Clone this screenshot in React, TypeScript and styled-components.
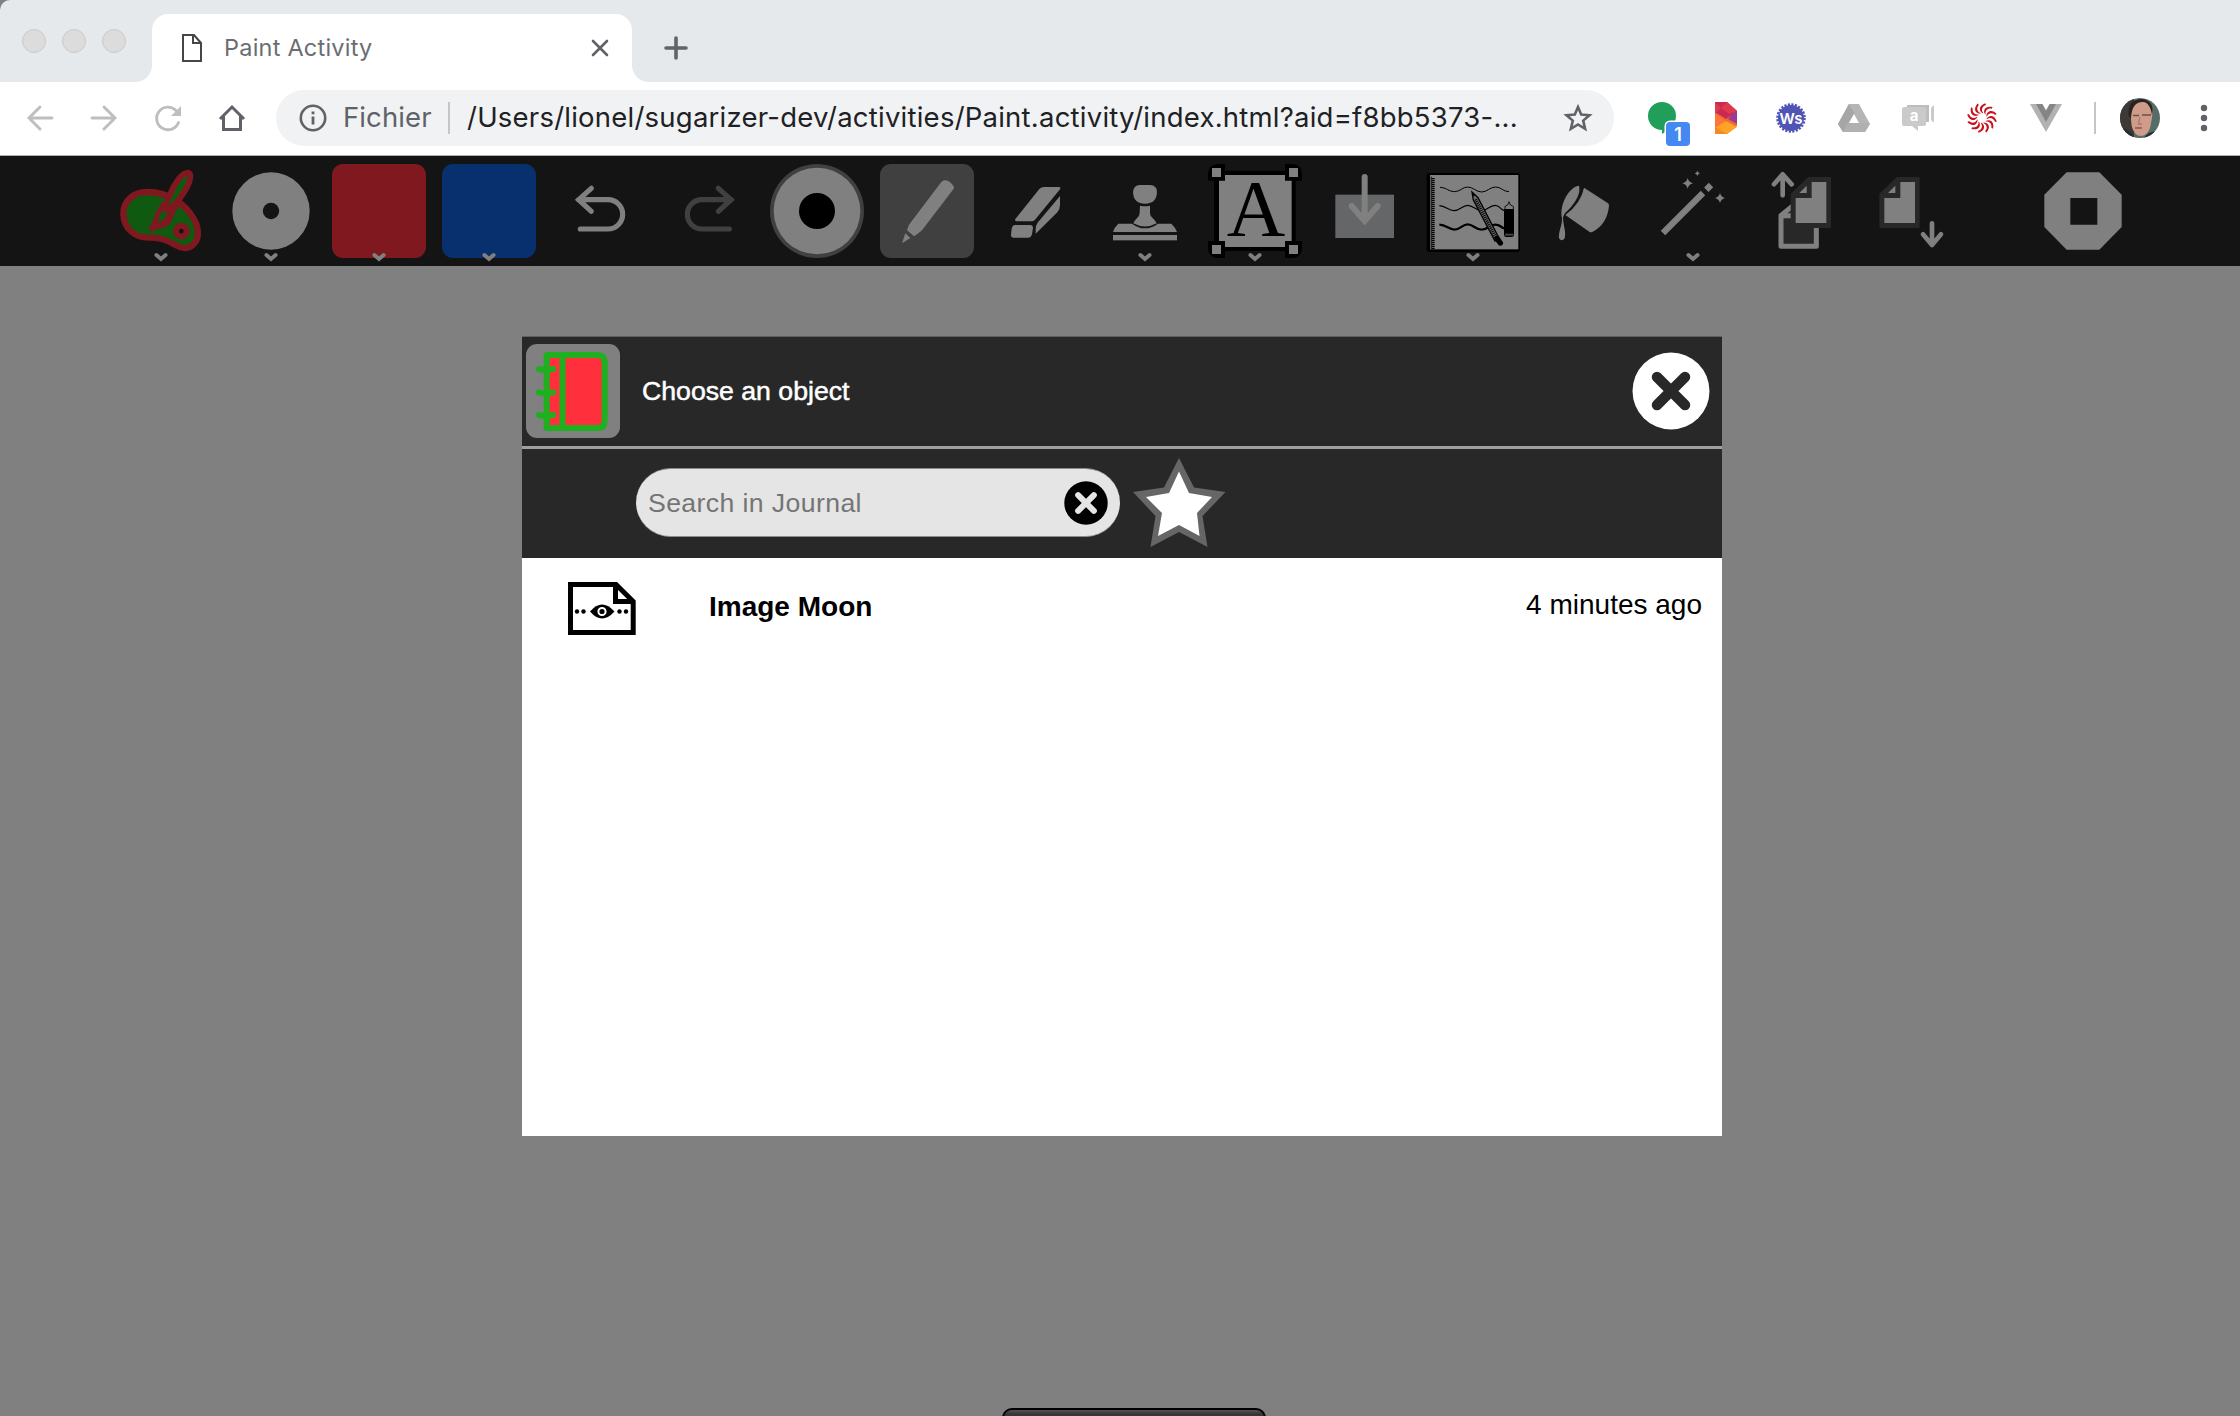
import React from "react";
import styled, { createGlobalStyle } from "styled-components";

const sans = `"Liberation Sans", Arial, sans-serif`;
const ui = `Inter, Roboto, sans-serif`;

const GlobalStyle = createGlobalStyle`
  * { box-sizing: border-box; }
  html, body { margin: 0; padding: 0; background: #808080; }
  svg { display: block; overflow: visible; flex: none; }
`;

const Window = styled.div`
  display: flex;
  flex-direction: column;
  width: 2240px;
  height: 1416px;
  overflow: hidden;
  background: #808080;
`;

/* ---------- browser chrome ---------- */
const TabStrip = styled.div`
  display: flex;
  align-items: flex-end;
  height: 82px;
  background: #e5e9ec;
  border-top-left-radius: 10px;
`;
const Lights = styled.div`
  display: flex;
  gap: 16px;
  width: 152px;
  height: 53px;
  padding-left: 22px;
  align-self: flex-start;
  align-items: flex-end;
`;
const Light = styled.span`
  width: 24px;
  height: 24px;
  border-radius: 50%;
  background: #dcdcdc;
  border: 1px solid #cacaca;
`;
const Tab = styled.div`
  position: relative;
  display: flex;
  align-items: center;
  width: 480px;
  height: 68px;
  padding: 0 23px 0 30px;
  background: #fff;
  border-radius: 16px 16px 0 0;
  &::before, &::after {
    content: "";
    position: absolute;
    bottom: 0;
    width: 16px;
    height: 16px;
  }
  &::before { left: -16px; background: radial-gradient(circle at 0 0, transparent 15.5px, #fff 16px); }
  &::after { right: -16px; background: radial-gradient(circle at 100% 0, transparent 15.5px, #fff 16px); }
`;
const TabTitle = styled.span`
  flex: 1;
  margin-left: 22px;
  font: 400 23.5px/30px ${ui};
  letter-spacing: 0.22px;
  color: #6a6e72;
  white-space: nowrap;
`;
const NewTab = styled.div`
  width: 24px;
  height: 24px;
  margin: 0 0 22px 32px;
`;
const AddressRow = styled.div`
  display: flex;
  align-items: center;
  height: 74px;
  padding-bottom: 1px;
  background: #fff;
  border-bottom: 1px solid #a9b0ae;
`;
const NavButtons = styled.div`
  display: flex;
  gap: 36px;
  width: 276px;
  padding-left: 26px;
`;
const Omnibox = styled.div`
  display: flex;
  align-items: center;
  width: 1338px;
  height: 56px;
  padding: 0 21px 0 23px;
  border-radius: 28px;
  background: #f1f2f4;
  font: 400 27.5px/40px ${ui};
  color: #202124;
  white-space: nowrap;
`;
const Scheme = styled.span`
  width: 105px;
  margin-left: 16px;
  margin-bottom: 2px;
  color: #5f6368;
  letter-spacing: 0.1px;
`;
const Divider = styled.span<{ $gap: number }>`
  width: 2px;
  height: 32px;
  margin-right: ${(p) => p.$gap}px;
  background: #c3c5c8;
`;
const Url = styled.span`
  flex: 1;
  margin-bottom: 2px;
  letter-spacing: 0.23px;
`;
const Extensions = styled.div`
  display: flex;
  align-items: center;
  height: 56px;
  margin-left: 28px;
`;
const Ext = styled.div<{ $w: number; $after: number }>`
  width: ${(p) => p.$w}px;
  height: 32px;
  margin-right: ${(p) => p.$after}px;
  position: relative;
`;
const Count = styled.span`
  position: absolute;
  left: 24px;
  top: 20px;
  width: 24px;
  height: 24px;
  border-radius: 4px;
  background: #4688f1;
  box-shadow: 0 0 0 1.5px #fff;
  color: #fff;
  text-align: center;
  font: 600 18px/25px ${ui};
`;

/* ---------- activity toolbar ---------- */
const Toolbar = styled.div`
  display: flex;
  height: 110px;
  padding: 8px 0 0 114px;
  background: #141414;
`;
const Tool = styled.div<{ $after?: number; $bg?: string }>`
  position: relative;
  flex: none;
  width: 94px;
  height: 94px;
  margin-right: ${(p) => p.$after ?? 16}px;
  border-radius: 11px;
  background: ${(p) => p.$bg ?? "transparent"};
`;
const ChevronBadge = styled.span`
  position: absolute;
  left: 40px;
  top: 89px;
`;

/* ---------- dialog ---------- */
const Stage = styled.main`
  display: flex;
  flex-direction: column;
  height: 1150px;
  padding: 70px 0 0 522px;
`;
const Dialog = styled.section`
  display: flex;
  flex: none;
  flex-direction: column;
  width: 1200px;
  height: 800px;
  background: #fff;
`;
const DialogHeader = styled.header`
  display: flex;
  align-items: center;
  height: 110px;
  padding: 0 12px 1px 4px;
  background: #282828;
  border-top: 1px solid #5f5f5f;
`;
const JournalTile = styled.div`
  width: 94px;
  height: 94px;
  border-radius: 11px;
  background: #808080;
`;
const DialogTitle = styled.h1`
  flex: 1;
  margin: 0 0 1px 22px;
  font: 400 26.67px/34px ${sans};
  color: #fff;
  -webkit-text-stroke: 0.5px #fff;
`;
const SearchRow = styled.div`
  display: flex;
  align-items: center;
  height: 112px;
  padding: 0 0 2px 114px;
  background: #282828;
  border-top: 3px solid #a0a0a0;
`;
const SearchBox = styled.div`
  display: flex;
  align-items: center;
  justify-content: space-between;
  width: 484px;
  height: 69px;
  margin-right: 13px;
  padding: 0 12px 0 10px;
  border: 1px solid #8c8c8c;
  border-width: 1px 0;
  border-radius: 35px;
  background: #e5e5e5;
`;
const Placeholder = styled.span`
  padding-left: 2px;
  font: 400 26.67px/34px ${sans};
  letter-spacing: 0.38px;
  color: #757575;
`;
const Entry = styled.div`
  display: flex;
  align-items: center;
  height: 98px;
  padding: 2px 20px 0 46px;
  font: 400 28px/34px ${sans};
  color: #000;
`;
const EntryName = styled.strong`
  flex: 1;
  margin: 0 0 2px 73px;
  font-weight: 700;
`;
const EntryTime = styled.span`
  margin-bottom: 6px;
`;
const BottomPalette = styled.div`
  width: 264px;
  height: 20px;
  margin: 272px 0 0 480px;
  border: 2px solid #000;
  border-radius: 10px;
  background: linear-gradient(#555255, #383538 4px);
  flex: none;
`;

const G = "#808080";

const Chevron = () => (
  <ChevronBadge>
    <svg width="14" height="9" viewBox="0 0 14 9">
      <path d="M2.400 2 7 6 11.600 2" fill="none" stroke={G} strokeWidth="3.900" strokeLinecap="round" />
    </svg>
  </ChevronBadge>
);

const Icon = ({ x, y = 42, children }: { x: number; y?: number; children: React.ReactNode }) => (
  <svg width="94" height="94" viewBox={`${x} ${y} 282 282`}>{children}</svg>
);

const spark = (x: number, y: number, r: number) =>
  `M${x} ${y - r}Q${x + r * 0.2} ${y - r * 0.2} ${x + r} ${y}Q${x + r * 0.2} ${y + r * 0.2} ${x} ${y + r}Q${x - r * 0.2} ${y + r * 0.2} ${x - r} ${y}Q${x - r * 0.2} ${y - r * 0.2} ${x} ${y - r}Z`;

const PaintIcon = () => (
  <Icon x={42}>
    <path d="M145 126C100 125 69 153 70 193C72 236 105 264 148 263C182 261 205 273 228 286C250 299 270 296 283 280C300 262 295 230 281 206C255 160 205 127 145 126Z" fill="#0f5a10" stroke="#80181f" strokeWidth="19" />
    <circle cx="244" cy="243.500" r="16" fill="#141414" stroke="#80181f" strokeWidth="18" />
    <path d="M264 68C243 68 216 110 203 156C205 172 216 170 226 162C253 129 276 95 270 73Q268 68 264 68Z" fill="#0f5a10" stroke="#80181f" strokeWidth="18" strokeLinejoin="round" />
    <path d="M197 156C170 182 172 212 154 236C180 225 204 227 211 203C215 184 225 176 230 164Z" fill="#80181f" stroke="#80181f" strokeWidth="15" strokeLinejoin="round" />
    <path d="M207 166C206 158 210 150 216 140L226 145Q218 158 207 166Z" fill="#0f5a10" />
    <path d="M191 184C203 184 202 196 196 204Q187 213 173 217C179 207 175 188 191 184Z" fill="#0f5a10" />
  </Icon>
);

const TextIcon = () => (
  <Icon x={684}>
    <path d="M717 42H735V62H915V42H933Q966 42 966 75V92H947V273H966V291Q966 324 933 324H915V303H735V324H717Q684 324 684 291V273H702V92H684V75Q684 42 717 42Z" fill="#000" />
    <path d="M735 75H915V92H935V273H915V291H735V273H717V92H735Z" fill={G} />
    {[[696, 54], [927, 54], [696, 285], [927, 285]].map(([a, b]) => (
      <rect key={`${a}-${b}`} x={a} y={b} width="27" height="27" fill={G} />
    ))}
    <text x="828" y="258" textAnchor="middle" fontFamily='"Liberation Serif", serif' fontSize="243">A</text>
  </Icon>
);

const TextureIcon = () => (
  <Icon x={78}>
    <rect x="80" y="69" width="280" height="237" rx="8" fill="#000" />
    <rect x="90" y="75" width="265" height="223" fill={G} />
    <path d="M94 80V297" stroke="#222" strokeWidth="4" />
    <path d="M100 84V297" stroke="#000" strokeWidth="8" strokeDasharray="4 2" />
    <g fill="none" stroke="#000">
      <path d="M120 112C140 112 145 125 163 125S187 111 203 111S229 126 245 126S270 111 287 111S309 125 327 125" strokeWidth="3" />
      <path d="M118 167C138 167 144 182 162 182S186 166 203 166S228 182 245 182S268 166 285 166S298 178 312 181" strokeWidth="3.500" />
      <path d="M118 224C140 224 145 239 163 239S187 223 203 223S228 239 245 239S268 224 285 224S300 231 312 235" strokeWidth="7" />
    </g>
    <path d="M216 126L220 150L285 273L298 266L234 143Z" fill="#6a6a6a" stroke="#000" strokeWidth="4" />
    <path d="M227 148L290 267" stroke="#000" strokeWidth="9" strokeDasharray="3 3" />
    <path d="M216 126L219 139L227 135Z" />
    <path d="M291 265L301 279" stroke="#000" strokeWidth="16" strokeLinecap="round" />
    <path d="M315 177V169L323 165L327 155L331 165L340 169V177" fill={G} stroke="#000" strokeWidth="2.500" />
    <path d="M312 177H342V254Q342 261 335 261H319Q312 261 312 254Z" />
    <path d="M315 254H340" stroke="#444" strokeWidth="6" />
  </Icon>
);

const DocShape = ({ dx }: { dx: number }) => (
  <g transform={`translate(${dx} 0)`}>
    <path d="M53 81H117Q121 81 121 85V230Q121 234 117 234H4Q0 234 0 230V131Z" fill="#282828" />
    <path d="M63 96H107V219H15V144H63Z" fill={G} />
    <path d="M48 107V129H26Z" fill={G} />
  </g>
);

const CrossCircle = ({ size, fill, cross }: { size: number; fill: string; cross: string }) => (
  <svg width={size} height={size} viewBox="0 0 78 78">
    <circle cx="39" cy="39" r="38.500" fill={fill} />
    <path d="M25 25L53 53M53 25L25 53" stroke={cross} strokeWidth="10.500" strokeLinecap="round" />
  </svg>
);

const Chrome = () => (
  <>
    <TabStrip>
      <Lights><Light /><Light /><Light /></Lights>
      <Tab>
        <svg width="20" height="28" viewBox="0 0 20 28" fill="none" stroke="#444648" strokeWidth="2">
          <path d="M1 1H12L19 9V27H1ZM11 1V9H19" />
        </svg>
        <TabTitle>Paint Activity</TabTitle>
        <svg width="18" height="18" viewBox="0 0 18 18" stroke="#5f6368" strokeWidth="2.600" strokeLinecap="round">
          <path d="M2 2 16 16M16 2 2 16" />
        </svg>
      </Tab>
      <NewTab>
        <svg width="24" height="24" viewBox="0 0 24 24" stroke="#606468" strokeWidth="3.600" strokeLinecap="round">
          <path d="M12 2V22M2 12H22" />
        </svg>
      </NewTab>
    </TabStrip>
    <AddressRow>
      <NavButtons>
        <svg width="28" height="28" viewBox="0 0 28 28" fill="none" stroke="#bdbec0" strokeWidth="2.900" strokeLinecap="round">
          <path d="M14 3 3 14 14 25M3 14H26" />
        </svg>
        <svg width="28" height="28" viewBox="0 0 28 28" fill="none" stroke="#bdbec0" strokeWidth="2.900" strokeLinecap="round">
          <path d="M14 3 25 14 14 25M25 14H2" />
        </svg>
        <svg width="28" height="28" viewBox="0 0 28 28" fill="none" stroke="#bdbec0" strokeWidth="2.900">
          <path d="M24.500 18.500A11.300 11.300 0 1 1 22 6.500" strokeLinecap="round" />
          <path d="M27 2V12H17Z" fill="#bdbec0" stroke="none" />
        </svg>
        <svg width="28" height="28" viewBox="0 0 28 28" fill="none" stroke="#5f6368" strokeWidth="3">
          <path d="M2 15 14 3 26 15M5.500 12.500V25.500H22.500V12.500" />
        </svg>
      </NavButtons>
      <Omnibox>
        <svg width="28" height="28" viewBox="0 0 28 28">
          <circle cx="14" cy="14" r="12.200" fill="none" stroke="#5f6368" strokeWidth="2.600" />
          <path d="M14 12.500V20.500M14 7.500V10.300" stroke="#5f6368" strokeWidth="2.800" />
        </svg>
        <Scheme>Fichier</Scheme>
        <Divider $gap={17} />
        <Url>/Users/lionel/sugarizer-dev/activities/Paint.activity/index.html?aid=f8bb5373-...</Url>
        <svg width="30" height="30" viewBox="0 0 30 30" fill="none" stroke="#5f6368" strokeWidth="2.600">
          <path d="M15 4 18.200 11.500 26.500 12.200 20.200 17.600 22.100 25.800 15 21.500 7.900 25.800 9.800 17.600 3.500 12.200 11.800 11.500Z" />
        </svg>
      </Omnibox>
      <Extensions>
        <Ext $w={73} $after={0}>
          <svg width="38" height="32" viewBox="0 0 38 32"><path d="M20 0A14 14 0 0 0 20 28V32C29 27 34 21 34 14A14 14 0 0 0 20 0Z" fill="#219e5a" /></svg>
          <Count>1</Count>
        </Ext>
        <Ext $w={22} $after={39}>
          <svg width="22" height="32" viewBox="0 0 22 32">
            <path d="M0 0H12L22 9V24L12 32H0Z" fill="#ef6b33" />
            <path d="M0 0H12L22 9L11 17L0 10Z" fill="#c92a54" />
            <path d="M0 0L6 6L0 12ZM12 0L6 6L14 12L22 9Z" fill="#de3a4d" />
            <path d="M22 9V22L13 17L18 11Z" fill="#9c3993" />
            <path d="M0 12L11 19L0 27Z" fill="#ff743a" />
            <path d="M0 32V26L11 19L22 25L12 32Z" fill="#fda428" />
            <path d="M0 25L12 32H0Z" fill="#f28a1f" />
          </svg>
        </Ext>
        <Ext $w={30} $after={32}>
          <svg width="30" height="32" viewBox="0 0 30 32">
            <circle cx="15" cy="16" r="13" fill="#5055b5" />
            <circle cx="15" cy="16" r="13.300" fill="none" stroke="#5055b5" strokeWidth="3" strokeDasharray="2.100 1.380" />
            <text x="15" y="22" textAnchor="middle" fill="#fff" fontFamily="Inter, sans-serif" fontWeight="600" fontSize="15">Ws</text>
          </svg>
        </Ext>
        <Ext $w={32} $after={32}>
          <svg width="32" height="32" viewBox="0 0 32 32">
            <path d="M11 2H21L32 22L27 30H5L0 22Z" fill="#b5b5b5" />
            <path d="M11 2 0 22 5 30 16 11Z" fill="#a6a6a6" />
            <path d="M5 30 10 21H32L27 30Z" fill="#b0b0b0" />
            <path d="M16 12 21 21H11Z" fill="#fff" />
          </svg>
        </Ext>
        <Ext $w={32} $after={33}>
          <svg width="32" height="32" viewBox="0 0 32 32">
            <path d="M5 3H27V20H5Z" fill="#bdbdbd" />
            <path d="M2 5H22Q24 5 24 7V22Q24 24 22 24H16V29L10 24H2Q0 24 0 22V7Q0 5 2 5ZM32 3V20Q29 20 29 16V7Q29 5 32 3Z" fill="#cacaca" />
            <text x="12" y="19" textAnchor="middle" fill="#fff" fontFamily="Inter, sans-serif" fontWeight="700" fontSize="15">a</text>
          </svg>
        </Ext>
        <Ext $w={30} $after={33}>
          <svg width="30" height="32" viewBox="-15 -16 30 32">
            {Array.from({ length: 12 }, (_, i) => (
              <path key={i} transform={`rotate(${i * 30})`} d="M1 -4.500C-3.500 -7 -3.500 -12.500 3.500 -14.800C4 -14 4 -13.500 3.500 -12.800C0 -11.500 -1 -8 1.200 -5Z" fill="#c8101c" />
            ))}
          </svg>
        </Ext>
        <Ext $w={32} $after={32}>
          <svg width="32" height="32" viewBox="0 0 32 32">
            <path d="M0 2H32L16 30Z" fill="#b2b2b2" />
            <path d="M6 2H12.500L16 9L19.500 2H26L16 20Z" fill="#858585" />
            <path d="M12.500 2H19.500L16 8Z" fill="#fff" />
          </svg>
        </Ext>
        <Divider $gap={24} />
        <svg width="40" height="40" viewBox="0 0 40 40">
          <defs><clipPath id="avatar"><circle cx="20" cy="20" r="20" /></clipPath></defs>
          <g clipPath="url(#avatar)">
            <path d="M0 0H40V40H0Z" fill="#566c67" />
            <path d="M0 0H14V40H0Z" fill="#3d3935" />
            <path d="M11 18C9 5 16 2 23 2C33 2 34 14 31 25C30 35 24 40 17 37C12 33 11 27 11 18Z" fill="#cf9c8b" />
            <path d="M9 19C7 6 13 1 22 1C31 2 34 8 32 17C31 10 28 4 23 4C15 4 12 9 11 20Z" fill="#292321" />
            <path d="M13 17.500H19M22 17H31" stroke="#6b5048" strokeWidth="1.600" />
            <path d="M20 19 18.500 26H22" fill="none" stroke="#ad7868" strokeWidth="1.300" />
            <path d="M15 30H22" fill="none" stroke="#96504f" strokeWidth="1.600" />
            <path d="M0 30Q9 29 14 40H0ZM40 34Q29 32 24 40H40Z" fill="#292c34" />
          </g>
        </svg>
        <svg width="48" height="28" viewBox="-40 0 48 28" fill="#5f6368">
          <circle cx="4" cy="4" r="3.200" /><circle cx="4" cy="14" r="3.200" /><circle cx="4" cy="24" r="3.200" />
        </svg>
      </Extensions>
    </AddressRow>
  </>
);

const Tools = () => (
  <Toolbar>
    <Tool><PaintIcon /><Chevron /></Tool>
    <Tool $after={14}>
      <Icon x={372}>
        <circle cx="513" cy="183" r="116" fill={G} />
        <circle cx="513" cy="183" r="24.500" fill="#141414" />
      </Icon>
      <Chevron />
    </Tool>
    <Tool $bg="#80181f"><Chevron /></Tool>
    <Tool $bg="#08306e"><Chevron /></Tool>
    <Tool>
      <Icon x={36}>
        <path d="M154 115L116 149L154 184M116 149H204A44 44 0 0 1 204 237H121" fill="none" stroke={G} strokeWidth="15.500" strokeLinecap="round" />
      </Icon>
    </Tool>
    <Tool $after={14}>
      <Icon x={366}>
        <path d="M535 115L573 149L535 184M573 149H486A44 44 0 0 0 486 237H568" fill="none" stroke="#404040" strokeWidth="15.500" strokeLinecap="round" />
      </Icon>
    </Tool>
    <Tool>
      <Icon x={690}>
        <circle cx="831" cy="183" r="141" fill="#404040" />
        <circle cx="831" cy="183" r="130" fill={G} />
        <circle cx="831" cy="183" r="54" fill="#000" />
      </Icon>
    </Tool>
    <Tool $bg="#404040">
      <Icon x={1020}>
        <path d="M1204 96Q1210 89 1217 91Q1233 94 1242 112Q1242 115 1240 118L1146 241L1136 249L1122 259L1101 241L1107 224Z" fill={G} />
        <path d="M1096 250L1111 264L1086 280Z" fill={G} />
      </Icon>
    </Tool>
    <Tool $after={14}>
      <Icon x={30}>
        <g fill={G}>
          <path d="M178 117Q184 111 192 111H237Q244 112 240 118L165 209Q161 214 154 214H111Q103 214 106 207Z" />
          <path d="M240 138V164Q240 178 232 187L167 251V238Q167 226 174 217Z" />
          <path d="M105 225H151Q159 226 159 234L156 252Q154 263 144 263H100Q92 262 93 254L95 236Q97 226 105 225Z" />
        </g>
      </Icon>
    </Tool>
    <Tool>
      <Icon x={354}>
        <g fill={G}>
          <path d="M480 105H510Q531 106 531 126C530 148 520 161 495 161S460 148 459 126Q460 106 480 105Z" />
          <path d="M480 167Q495 170 510 167V187C510 205 522 203 530 220Q495 239 460 220C468 203 478 205 479 187Z" />
          <path d="M415 221H456Q495 249 534 221H574Q586 232 591 246H399Q403 232 415 221Z" />
          <rect x="399" y="255" width="192" height="16" />
        </g>
      </Icon>
      <Chevron />
    </Tool>
    <Tool><TextIcon /><Chevron /></Tool>
    <Tool $after={14}>
      <Icon x={1014}>
        <rect x="1066" y="134" width="176" height="130" fill="#646668" />
        <path d="M1154 81V211M1115 168L1154 213L1193 168" fill="none" stroke={G} strokeWidth="18" strokeLinecap="round" />
      </Icon>
    </Tool>
    <Tool><TextureIcon /><Chevron /></Tool>
    <Tool>
      <Icon x={408}>
        <path d="M552 113L624 160Q627 162 627 167Q622 222 577 246Q573 248 569 246L496 195Q543 160 552 113Z" fill={G} />
        <path d="M537 107Q545 137 504 181Q491 190 489 205C490 227 499 246 494 265Q485 277 477 265C475 245 487 226 486 205C477 160 511 108 537 107Z" fill={G} />
      </Icon>
    </Tool>
    <Tool>
      <Icon x={738}>
        <path d="M789 249L909 129M919 119L933 105" stroke={G} strokeWidth="19" />
        <path d={spark(892, 70, 8) + spark(863, 100, 16) + spark(960, 144, 15)} fill={G} />
      </Icon>
      <Chevron />
    </Tool>
    <Tool $after={14}>
      <Icon x={48}>
        <path d="M123 196L156 163V197H230V289H123Z" fill="#282828" />
        <path d="M160 166L123 196V289H229V225M123 197H160" fill="none" stroke={G} strokeWidth="15" strokeLinejoin="round" />
        <DocShape dx={152} />
        <path d="M128 136V76M102 103L128 73L155 103" fill="none" stroke={G} strokeWidth="14" strokeLinecap="round" strokeLinejoin="round" />
      </Icon>
    </Tool>
    <Tool $after={78}>
      <Icon x={372}>
        <DocShape dx={418} />
        <path d="M576 220V282M549 253L576 285L603 253" fill="none" stroke={G} strokeWidth="14" strokeLinecap="round" strokeLinejoin="round" />
      </Icon>
    </Tool>
    <Tool>
      <Icon x={888}>
        <path fillRule="evenodd" d="M980 67H1078L1145 134V231L1078 299H980L913 231V134ZM991 144V224H1072V144Z" fill={G} />
      </Icon>
    </Tool>
  </Toolbar>
);

export default function App() {
  return (
    <Window>
      <GlobalStyle />
      <Chrome />
      <Tools />
      <Stage>
        <Dialog>
          <DialogHeader>
            <JournalTile>
              <Icon x={48} y={57}>
                <path d="M110 90H262Q284 90 284 112V287Q284 309 262 309H110Z" fill="#ff303c" stroke="#1eb01e" strokeWidth="18" strokeLinejoin="round" />
                <path d="M157.500 90V309" stroke="#1eb01e" strokeWidth="18" />
                <path d="M86 132Q107 138 129 132M86 202Q107 208 129 202M86 270Q107 276 129 270" fill="none" stroke="#1eb01e" strokeWidth="18" strokeLinecap="round" />
              </Icon>
            </JournalTile>
            <DialogTitle>Choose an object</DialogTitle>
            <CrossCircle size={78} fill="#fff" cross="#282828" />
          </DialogHeader>
          <SearchRow>
            <SearchBox>
              <Placeholder>Search in Journal</Placeholder>
              <CrossCircle size={44} fill="#000" cross="#e5e5e5" />
            </SearchBox>
            <svg width="93" height="90" viewBox="0 0 93 90">
              <path d="M46 0L61 29.500L92.500 34L69.500 58L74.500 89L46 74L17.500 89L22.500 58L0 34L31 29.500Z" fill="#666" />
              <path d="M46 13.500L56 35L79 39L64 55L66.500 78L46 67L25 78L29 55L13 39L36 35Z" fill="#fff" />
            </svg>
          </SearchRow>
          <Entry>
            <svg width="68" height="53" viewBox="568 582 68 53">
              <path d="M570.500 584.500H616L633.200 601.500V632.500H570.500ZM615.500 584.500V601.500H633" fill="#fff" stroke="#000" strokeWidth="5" />
              <path d="M590 611.500Q602 597.500 614.500 611.500Q602 625.500 590 611.500Z" />
              <circle cx="602" cy="611.500" r="3.600" stroke="#fff" strokeWidth="2" />
              <g><circle cx="577" cy="611.500" r="2.200" /><circle cx="583.500" cy="611.500" r="2.200" /><circle cx="619.500" cy="611.500" r="2.200" /><circle cx="626" cy="611.500" r="2.200" /></g>
            </svg>
            <EntryName>Image Moon</EntryName>
            <EntryTime>4 minutes ago</EntryTime>
          </Entry>
        </Dialog>
        <BottomPalette />
      </Stage>
    </Window>
  );
}
